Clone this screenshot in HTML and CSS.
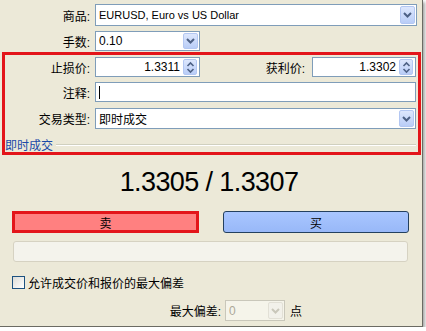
FILE: index.html
```html
<!DOCTYPE html>
<html lang="zh">
<head>
  <meta charset="UTF-8" />
  <title>下单</title>
  <link rel="stylesheet" href="styles.css">
</head>
<body>
  <div class="window">
    <!-- 商品 / 手数 -->
    <div class="row row-symbol">
      <div class="label">商品:</div>
      <div class="combo wide">
        <span class="value">EURUSD, Euro vs US Dollar</span>
        <span class="drop"><svg width="9" height="6" viewBox="0 0 9 6"><path d="M1 1l3.5 3.5L8 1" fill="none" stroke="#4d6185" stroke-width="2"/></svg></span>
      </div>
    </div>
    <div class="row row-lots">
      <div class="label">手数:</div>
      <div class="combo lots">
        <span class="value">0.10</span>
        <span class="drop"><svg width="9" height="6" viewBox="0 0 9 6"><path d="M1 1l3.5 3.5L8 1" fill="none" stroke="#4d6185" stroke-width="2"/></svg></span>
      </div>
    </div>

    <!-- 红框 -->
    <div class="order-box">
      <div class="row row-sl">
        <div class="label inner">止损价:</div>
        <div class="spin">
          <span class="num">1.3311</span>
          <span class="spin-btn"><svg width="9" height="13" viewBox="0 0 9 13"><path d="M1.5 5L4.5 2l3 3M1.5 8l3 3 3-3" fill="none" stroke="#4d6185" stroke-width="1.6"/></svg></span>
        </div>
        <div class="label tp">获利价:</div>
        <div class="spin tp-spin">
          <span class="num">1.3302</span>
          <span class="spin-btn"><svg width="9" height="13" viewBox="0 0 9 13"><path d="M1.5 5L4.5 2l3 3M1.5 8l3 3 3-3" fill="none" stroke="#4d6185" stroke-width="1.6"/></svg></span>
        </div>
      </div>
      <div class="row row-comment">
        <div class="label inner">注释:</div>
        <div class="text-input"><span class="caret"></span></div>
      </div>
      <div class="row row-type">
        <div class="label inner">交易类型:</div>
        <div class="combo type">
          <span class="value">即时成交</span>
          <span class="drop"><svg width="9" height="6" viewBox="0 0 9 6"><path d="M1 1l3.5 3.5L8 1" fill="none" stroke="#4d6185" stroke-width="2"/></svg></span>
        </div>
      </div>
      <div class="group-title">
        <span>即时成交</span>
        <div class="etch"></div>
      </div>
    </div>

    <div class="price">1.3305 / 1.3307</div>

    <div class="buttons">
      <button class="btn sell">卖</button>
      <button class="btn buy">买</button>
    </div>

    <div class="progress"></div>

    <div class="check-row">
      <span class="checkbox"></span>
      <span>允许成交价和报价的最大偏差</span>
    </div>

    <div class="dev-row">
      <div class="dev-label">最大偏差:</div>
      <div class="combo disabled">
        <span class="value">0</span>
        <span class="drop"><svg width="9" height="6" viewBox="0 0 9 6"><path d="M1 1l3.5 3.5L8 1" fill="none" stroke="#c9c7ba" stroke-width="2"/></svg></span>
      </div>
      <div class="unit">点</div>
    </div>
  </div>
</body>
</html>
```

FILE: styles.css
```css
/* 全体 */
html, body {
  margin: 0;
  padding: 0;
  background: #fff;
}
body {
  font-family: "Liberation Sans", "Noto Sans CJK SC", sans-serif;
  font-size: 12px;
  color: #000;
}
.window {
  width: 422px;
  height: 326px;
  background: #ece9d8;
  border-right: 1px solid #6b6b63;
  border-bottom: 1px solid #6b6b63;
  box-shadow: 2px 2px 3px rgba(0,0,0,0.35);
  overflow: hidden;
}

/* 行 */
.row {
  display: flex;
  align-items: center;
}
.label {
  width: 90px;
  margin-right: 5px;
  text-align: right;
  white-space: nowrap;
}
.label.inner { width: 85px; }
.row-symbol { height: 22px; margin-top: 4px; }
.row-lots { height: 20px; margin-top: 5px; }

/* コンボ */
.combo {
  display: flex;
  align-items: center;
  height: 100%;
  box-sizing: border-box;
  background: #fff;
  border: 1px solid #7f9db9;
  padding-left: 3px;
}
.combo .value { white-space: nowrap; }
.combo.wide { width: 322px; font-size: 11px; }
.combo.lots { width: 105px; }
.drop {
  margin-left: auto;
  margin-right: 1px;
  width: 15px;
  height: calc(100% - 2px);
  box-sizing: border-box;
  display: flex;
  align-items: center;
  justify-content: center;
  background: linear-gradient(#dde7fd, #b9cdf7);
  border: 1px solid #b3c7f2;
  border-radius: 2px;
}

/* 赤枠 */
.order-box {
  margin: 1px 1px 0 2px;
  height: 103px;
  box-sizing: border-box;
  border: 3px solid #e3151a;
  padding-right: 2px;
}
.row-sl { height: 20px; margin-top: 2px; }
.spin {
  width: 105px;
  height: 100%;
  box-sizing: border-box;
  background: #fff;
  border: 1px solid #7f9db9;
  display: flex;
  align-items: center;
}
.spin .num {
  flex: 1;
  text-align: right;
  padding-right: 3px;
}
.spin-btn {
  width: 14px;
  height: 16px;
  margin-right: 2px;
  display: flex;
  align-items: center;
  justify-content: center;
  background: linear-gradient(#dde7fd, #b9cdf7);
  border: 1px solid #b3c7f2;
  border-radius: 2px;
  box-sizing: border-box;
}
.label.tp {
  flex: 1;
  width: auto;
  margin-right: 7px;
}
.tp-spin { width: 104px; }

.row-comment { height: 20px; margin-top: 5px; }
.text-input {
  flex: 1;
  height: 100%;
  box-sizing: border-box;
  background: #fff;
  border: 1px solid #7f9db9;
  display: flex;
  align-items: center;
  padding-left: 3px;
}
.caret {
  width: 1px;
  height: 13px;
  background: #000;
}
.row-type { height: 21px; margin-top: 6px; }
.combo.type { flex: 1; }

.group-title {
  display: flex;
  align-items: center;
  height: 13px;
  margin-top: 9px;
  color: #1b4aa8;
}
.etch {
  flex: 1;
  margin-left: 3px;
  border-top: 1px solid #d0d0bf;
  border-bottom: 1px solid #fff;
}

/* 価格 */
.price {
  margin-top: 12px;
  height: 30px;
  line-height: 30px;
  text-align: center;
  font-size: 27px;
  letter-spacing: -0.6px;
  padding-right: 4px;
}

/* ボタン */
.buttons {
  display: flex;
  margin-top: 14px;
  height: 22px;
  padding-left: 12px;
  gap: 24px;
}
.btn {
  font-family: inherit;
  font-size: 12px;
  padding: 0;
  box-sizing: border-box;
  height: 22px;
  color: #000;
}
.sell {
  width: 187px;
  background: #ff8080;
  border: 3px solid #e3151a;
}
.buy {
  width: 186px;
  background: linear-gradient(#a9c6ff, #98b8f8);
  border: 1px solid #24405f;
  border-radius: 3px;
}

.progress {
  margin: 8px 0 0 13px;
  width: 395px;
  height: 21px;
  box-sizing: border-box;
  background: #f4f3ec;
  border: 1px solid #d6d2c2;
  border-radius: 3px;
}

/* チェック */
.check-row {
  display: flex;
  align-items: center;
  margin: 14px 0 0 12px;
  height: 13px;
  gap: 3px;
}
.checkbox {
  width: 13px;
  height: 13px;
  box-sizing: border-box;
  border: 1px solid #1c5180;
  background: linear-gradient(135deg, #dcdcd7, #fff);
}

/* 最大偏差 */
.dev-row {
  display: flex;
  align-items: center;
  margin-top: 11px;
  height: 21px;
}
.dev-label {
  width: 221px;
  margin-right: 4px;
  text-align: right;
}
.combo.disabled {
  width: 60px;
  background: #f5f4ea;
  border-color: #c9c7ba;
  color: #aca899;
}
.combo.disabled .drop {
  background: #f2f1ea;
  border-color: #e2e0d6;
}
.unit { margin-left: 5px; }
```
